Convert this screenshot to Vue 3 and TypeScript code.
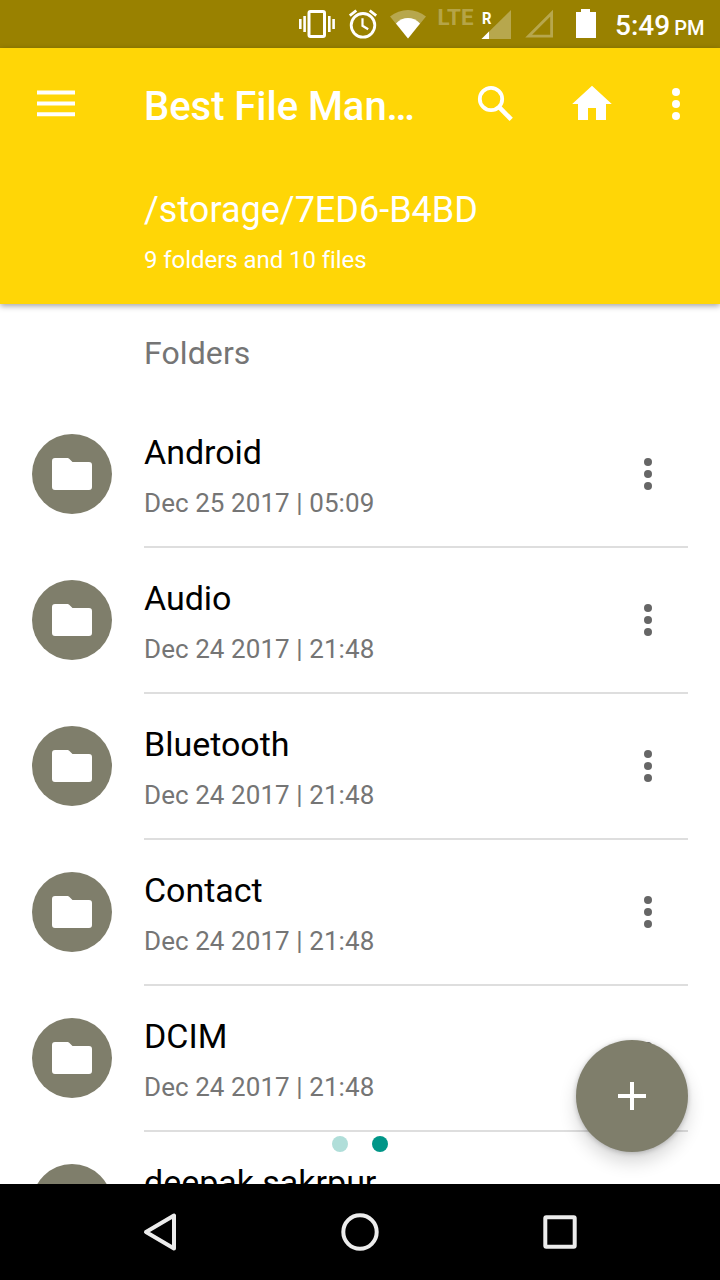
<script setup lang="ts">
interface Folder {
  name: string
  modified: string
}

const folders: Folder[] = [
  { name: 'Android', modified: 'Dec 25 2017 | 05:09' },
  { name: 'Audio', modified: 'Dec 24 2017 | 21:48' },
  { name: 'Bluetooth', modified: 'Dec 24 2017 | 21:48' },
  { name: 'Contact', modified: 'Dec 24 2017 | 21:48' },
  { name: 'DCIM', modified: 'Dec 24 2017 | 21:48' },
  { name: 'deepak sakrpur', modified: 'Dec 24 2017 | 21:48' },
]
</script>

<template>
  <div class="screen">
    <div class="status">
      <svg class="vibrate" viewBox="298 8 38 32" width="38" height="32" fill="#fff">
        <rect x="309" y="11.5" width="15.5" height="25" rx="1.5" fill="none" stroke="#fff" stroke-width="3" />
        <path d="M299 19h2.6v10H299zM303.3 16h2.6v16h-2.6zM328 16h2.6v16H328zM332.300 19h2.600v10h-2.600z" />
      </svg>
      <svg class="alarm" viewBox="348 8 30 32" width="30" height="32" fill="none" stroke="#fff" stroke-width="2.800">
        <circle cx="363" cy="25.300" r="11.800" />
        <path d="M362.500 18.200v7.600l5.700 3.500" stroke-width="2.200" />
        <path d="M349.800 15.700l6.500-5.200M376.200 15.700l-6.500-5.200" />
      </svg>
      <svg class="wifi" viewBox="390 8 36 32" width="36" height="32" fill="#fff">
        <path d="M390 16.500C400.500 7.800 415.500 7.800 426 16.500L408 38.500z" opacity=".3" />
        <path d="M396 23.500C403 16.300 413 16.300 420 23.500L408 38.500z" />
      </svg>
      <svg class="lte" viewBox="434 0 44 40" width="44" height="40">
        <text x="437.500" y="25" textLength="36" lengthAdjust="spacingAndGlyphs">LTE</text>
      </svg>
      <svg class="signal" viewBox="480 8 32 32" width="32" height="32" fill="#fff">
        <path d="M481.500 39L511 10v29z" opacity=".3" />
        <path d="M481.500 39l7.500-7.500V39z" />
        <text x="482" y="24" textLength="9.500" lengthAdjust="spacingAndGlyphs">R</text>
      </svg>
      <svg class="nosignal" viewBox="524 8 30 32" width="30" height="32" fill="none" stroke="#fff" stroke-width="2.800">
        <path d="M528.600 36.200h23v-23z" opacity=".3" />
      </svg>
      <svg class="battery" viewBox="575 8 22 32" width="22" height="32" fill="#fff">
        <path d="M581 9h9v3h6v26h-20V12h5z" />
      </svg>
      <div class="clock">5:49<span>PM</span></div>
    </div>

    <header class="bar">
      <div class="toolbar">
        <svg class="menu" viewBox="0 0 40 32" width="40" height="32" fill="#fff">
          <path d="M1 2.500h38v4H1zM1 13.500h38v4H1zM1 24.300h38v4H1z" />
        </svg>
        <h1>Best File Man…</h1>
        <svg class="search" viewBox="476 84 40 40" width="40" height="40" fill="none" stroke="#fff">
          <circle cx="491" cy="99" r="11.200" stroke-width="3.800" />
          <path d="M499.400 107.400l11.800 12" stroke-width="4.600" />
        </svg>
        <svg class="home" viewBox="572 84 40 40" width="40" height="40" fill="#fff">
          <path d="M592 85.800L611.800 104H606v16h-10v-12h-8v12h-10v-16h-5.800z" />
        </svg>
        <svg class="more" viewBox="0 0 8 32" width="8" height="32" fill="#fff">
          <circle cx="4" cy="4" r="4" /><circle cx="4" cy="16" r="4" /><circle cx="4" cy="28" r="4" />
        </svg>
      </div>
      <p class="path">/storage/7ED6-B4BD</p>
      <p class="count">9 folders and 10 files</p>
    </header>

    <main class="content">
      <h2>Folders</h2>
      <ul>
        <li v-for="folder in folders" :key="folder.name">
          <div class="avatar">
            <svg viewBox="0 0 40 32" width="40" height="32" fill="#fff">
              <path d="M3 0h12.500q1 0 1.700.7L20.500 4H37q3 0 3 3v22q0 3-3 3H3q-3 0-3-3V3q0-3 3-3z" />
            </svg>
          </div>
          <div class="info">
            <div class="text">
              <div class="name">{{ folder.name }}</div>
              <div class="date">{{ folder.modified }}</div>
            </div>
            <svg viewBox="0 0 8 32" width="8" height="32" fill="#666">
              <circle cx="4" cy="4" r="4" /><circle cx="4" cy="16" r="4" /><circle cx="4" cy="28" r="4" />
            </svg>
          </div>
        </li>
      </ul>
      <div class="pager"><i></i><i class="active"></i></div>
      <button class="fab" aria-label="Add">
        <svg viewBox="0 0 28 28" width="28" height="28" fill="#fff">
          <path d="M12 0h4v12h12v4H16v12h-4V16H0v-4h12z" />
        </svg>
      </button>
    </main>

    <nav class="nav">
      <svg viewBox="0 0 40 40" width="40" height="40">
        <path d="M34 3.500v33L6 20z" />
      </svg>
      <svg viewBox="0 0 40 40" width="40" height="40">
        <circle cx="20" cy="20" r="16.700" />
      </svg>
      <svg viewBox="0 0 40 40" width="40" height="40">
        <rect x="5.300" y="5.300" width="29.400" height="29.400" rx="1" />
      </svg>
    </nav>
  </div>
</template>

<style>
body {
  margin: 0;
}
</style>

<style scoped>
.screen {
  width: 720px;
  height: 1280px;
  display: flex;
  flex-direction: column;
  overflow: hidden;
  background: #fff;
  font-family: Roboto, "Liberation Sans", sans-serif;
}

svg {
  display: block;
  flex: none;
}

h1, h2, p, ul {
  margin: 0;
  padding: 0;
  font-weight: 400;
}

.status {
  flex: none;
  box-sizing: border-box;
  height: 48px;
  padding: 8px 0 0 298px;
  display: flex;
  background: #998100;
  color: #fff;
}

.alarm { margin-left: 12px; }
.wifi { margin-left: 12px; }
.lte { margin: -8px 0 0 8px; }
.lte text { font-size: 21.500px; font-weight: 700; fill: #fff; fill-opacity: .3; }
.signal { margin-left: 2px; }
.signal text { font-size: 17px; font-weight: 700; }
.nosignal { margin-left: 12px; }
.battery { margin-left: 21px; }

.clock {
  margin-left: 18px;
  font-size: 28px;
  font-weight: 500;
  line-height: 36px;
  white-space: nowrap;
}

.clock span {
  margin-left: 4px;
  font-size: 20px;
}

.bar {
  flex: none;
  position: relative;
  z-index: 1;
  height: 256px;
  background: #ffd606;
  color: #fff;
  box-shadow: 0 2px 6px rgba(0, 0, 0, .36);
}

.toolbar {
  height: 112px;
  padding: 0 40px 0 36px;
  display: flex;
  align-items: center;
}

.toolbar h1 {
  width: 332px;
  margin: 6px 0 0 68px;
  font-size: 40px;
  font-weight: 500;
  line-height: 48px;
  letter-spacing: -.04px;
  white-space: nowrap;
}

.home { margin-left: 56px; }
.more { margin-left: 60px; }

.path {
  margin: 26px 0 0 144px;
  font-size: 36px;
  line-height: 48px;
}

.count {
  margin: 10px 0 0 144px;
  font-size: 24px;
  line-height: 32px;
  letter-spacing: -.06px;
}

.content {
  flex: 1;
  position: relative;
  overflow: hidden;
}

h2 {
  height: 98px;
  padding-left: 144px;
  font-size: 32px;
  line-height: 98px;
  letter-spacing: .1px;
  color: #757575;
}

ul {
  list-style: none;
}

li {
  height: 146px;
  padding: 0 32px;
  display: flex;
}

.avatar {
  flex: none;
  width: 80px;
  height: 80px;
  margin: 32px 32px 0 0;
  border-radius: 50%;
  display: flex;
  align-items: center;
  justify-content: center;
  background: #7f7e6b;
}

.info {
  flex: 1;
  box-sizing: border-box;
  border-bottom: 2px solid #dedede;
  padding-right: 36px;
  display: flex;
  align-items: center;
  justify-content: space-between;
}

.text {
  margin-top: 2px;
}

.name {
  font-size: 34px;
  line-height: 46px;
  letter-spacing: -.02px;
  color: #000;
  white-space: nowrap;
}

.date {
  margin: 10px 0 1px;
  font-size: 26px;
  line-height: 36px;
  letter-spacing: .07px;
  color: #757575;
  white-space: nowrap;
}

.pager {
  position: absolute;
  left: 0;
  right: 0;
  bottom: 32px;
  display: flex;
  justify-content: center;
  gap: 24px;
}

.pager i {
  width: 16px;
  height: 16px;
  border-radius: 50%;
  background: #b0ded9;
}

.pager .active {
  background: #009688;
}

.fab {
  position: absolute;
  right: 32px;
  bottom: 32px;
  width: 112px;
  height: 112px;
  padding: 0;
  border: 0;
  border-radius: 50%;
  display: flex;
  align-items: center;
  justify-content: center;
  background: #7f7e6b;
  box-shadow: 0 10px 18px rgba(0, 0, 0, .16), 0 1px 5px rgba(0, 0, 0, .22);
}

.nav {
  flex: none;
  height: 96px;
  display: flex;
  align-items: center;
  justify-content: center;
  gap: 160px;
  background: #000;
}

.nav svg {
  fill: none;
  stroke: #ececec;
  stroke-width: 4;
  stroke-linejoin: round;
}
</style>
